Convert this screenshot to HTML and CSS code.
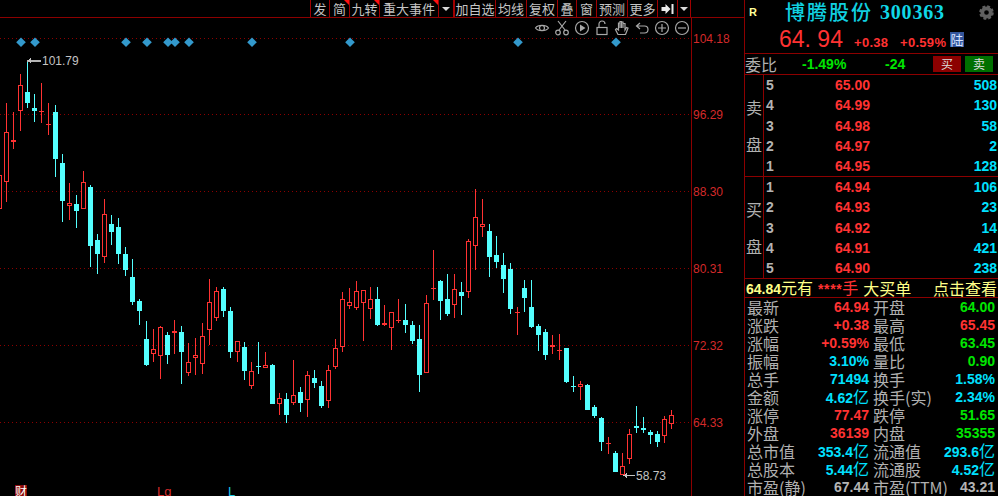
FILE: index.html
```html
<!DOCTYPE html>
<html lang="zh-CN">
<head>
<meta charset="utf-8">
<title>博腾股份 300363</title>
<link rel="stylesheet" href="styles.css">
</head>
<body>
<div class="terminal">
  <section class="chart">
    <nav class="toolbar">
      <span class="tool w19">发</span>
      <span class="tool w20 flag">简</span>
      <span class="tool w30 flag">九转</span>
      <span class="tool w59 flag">重大事件</span>
      <span class="tool w15"><i class="caret"></i></span>
      <span class="tool w42 thick">加自选</span>
      <span class="tool w31">均线</span>
      <span class="tool w31">复权</span>
      <span class="tool w19">叠</span>
      <span class="tool w20">窗</span>
      <span class="tool w31">预测</span>
      <span class="tool w30">更多</span>
      <span class="tool w20">
        <svg class="skip" viewBox="0 0 12 12"><path d="M0 4h4V1l5 5-5 5V8H0zM10 1h2v10h-2z"/></svg>
      </span>
      <span class="tool w14 last"><i class="caret"></i></span>
    </nav>

    <div class="tools">
      <svg viewBox="0 0 16 16"><path d="M1.500 8C4 4.500 12 4.500 14.500 8 12 11.500 4 11.500 1.500 8z"/><circle cx="8" cy="8" r="2.500"/></svg>
      <svg viewBox="0 0 16 16"><path d="M4 1l7 9M12 1l-7 9"/><circle cx="4" cy="12.500" r="2.300"/><circle cx="12" cy="12.500" r="2.300"/></svg>
      <svg viewBox="0 0 16 16"><circle cx="8" cy="8" r="6.500"/><path class="solid" d="M6 4.500L11.500 8 6 11.500z"/></svg>
      <svg viewBox="0 0 16 16"><rect x="3" y="7.500" width="10" height="7"/><path d="M5 7.500V4a3 3 0 0 1 6 0"/></svg>
      <svg viewBox="0 0 16 16"><path d="M4 14.500L1.500 9.500l1-1L4.500 10V3h1.500v5V1.500h1.500V8V2h1.500v6V3.500H11V10l1.500-2.500 1.500.5-1.500 4-1 2.500z"/></svg>
      <svg viewBox="0 0 16 16"><path d="M6 3L2.500 6 6 9M2.500 6h8a3 3 0 0 1 0 7H6"/></svg>
      <svg viewBox="0 0 16 16"><circle cx="8" cy="8" r="6.500"/><path d="M4 8h8M8 4v8"/></svg>
      <svg viewBox="0 0 16 16"><circle cx="8" cy="8" r="6.500"/><path d="M4 8h8"/></svg>
    </div>

    <svg id="plot" class="plot" viewBox="0 18 744 478" width="744" height="478"></svg>
  </section>

  <aside class="panel">
    <header class="quote">
      <div class="quote-title">
        <span class="badge-r">R</span>
        <span class="name">博腾股份</span>
        <span class="code">300363</span>
        <svg class="gear" viewBox="0 0 16 16"><circle class="gear-body" cx="8" cy="8" r="4.500"/><circle class="gear-teeth" cx="8" cy="8" r="6.500"/></svg>
      </div>
      <div class="quote-price">
        <span class="last-price">64. 94</span>
        <span class="delta">+0.38</span>
        <span class="delta pct">+0.59%</span>
        <span class="lu">陆</span>
      </div>
    </header>

    <div class="ratio">
      <span class="label">委比</span>
      <span class="num green ratio-pct">-1.49%</span>
      <span class="num green ratio-diff">-24</span>
      <span class="btn buy">买</span>
      <span class="btn sell">卖</span>
    </div>

    <div class="book">
      <div class="side"><span>卖</span><span>盘</span></div>
      <div class="levels">
        <div class="level"><b>5</b><span class="num red">65.00</span><span class="num cyan">508</span></div>
        <div class="level"><b>4</b><span class="num red">64.99</span><span class="num cyan">130</span></div>
        <div class="level"><b>3</b><span class="num red">64.98</span><span class="num cyan">58</span></div>
        <div class="level"><b>2</b><span class="num red">64.97</span><span class="num cyan">2</span></div>
        <div class="level"><b>1</b><span class="num red">64.95</span><span class="num cyan">128</span></div>
      </div>
    </div>
    <div class="book">
      <div class="side"><span>买</span><span>盘</span></div>
      <div class="levels">
        <div class="level"><b>1</b><span class="num red">64.94</span><span class="num cyan">106</span></div>
        <div class="level"><b>2</b><span class="num red">64.93</span><span class="num cyan">23</span></div>
        <div class="level"><b>3</b><span class="num red">64.92</span><span class="num cyan">14</span></div>
        <div class="level"><b>4</b><span class="num red">64.91</span><span class="num cyan">421</span></div>
        <div class="level"><b>5</b><span class="num red">64.90</span><span class="num cyan">238</span></div>
      </div>
    </div>

    <div class="bigorder">
      <span><b>64.84</b>元有</span>
      <span class="stars"><b>****</b>手</span>
      <span>大买单</span>
      <span class="lookup">点击查看</span>
    </div>

    <div class="stats">
      <div class="stat"><span class="label">最新</span><span class="num red">64.94</span></div>
      <div class="stat"><span class="label">开盘</span><span class="num green">64.00</span></div>
      <div class="stat"><span class="label">涨跌</span><span class="num red">+0.38</span></div>
      <div class="stat"><span class="label">最高</span><span class="num red">65.45</span></div>
      <div class="stat"><span class="label">涨幅</span><span class="num red">+0.59%</span></div>
      <div class="stat"><span class="label">最低</span><span class="num green">63.45</span></div>
      <div class="stat"><span class="label">振幅</span><span class="num cyan">3.10%</span></div>
      <div class="stat"><span class="label">量比</span><span class="num green">0.90</span></div>
      <div class="stat"><span class="label">总手</span><span class="num cyan">71494</span></div>
      <div class="stat"><span class="label">换手</span><span class="num cyan">1.58%</span></div>
      <div class="stat"><span class="label">金额</span><span class="num cyan">4.62<i class="unit">亿</i></span></div>
      <div class="stat"><span class="label">换手(实)</span><span class="num cyan">2.34%</span></div>
      <div class="stat"><span class="label">涨停</span><span class="num red">77.47</span></div>
      <div class="stat"><span class="label">跌停</span><span class="num green">51.65</span></div>
      <div class="stat"><span class="label">外盘</span><span class="num red">36139</span></div>
      <div class="stat"><span class="label">内盘</span><span class="num green">35355</span></div>
      <div class="stat"><span class="label">总市值</span><span class="num cyan">353.4<i class="unit">亿</i></span></div>
      <div class="stat"><span class="label">流通值</span><span class="num cyan">293.6<i class="unit">亿</i></span></div>
      <div class="stat"><span class="label">总股本</span><span class="num cyan">5.44<i class="unit">亿</i></span></div>
      <div class="stat"><span class="label">流通股</span><span class="num cyan">4.52<i class="unit">亿</i></span></div>
      <div class="stat"><span class="label">市盈(静)</span><span class="num gray">67.44</span></div>
      <div class="stat"><span class="label">市盈(TTM)</span><span class="num gray">43.21</span></div>
    </div>
  </aside>
</div>
<script src="chart.js"></script>
</body>
</html>
```
FILE: styles.css
```css
* { box-sizing: border-box; }

html, body {
  margin: 0;
  height: 100%;
  background: #000;
  overflow: hidden;
}

.terminal {
  display: flex;
  width: 998px;
  height: 496px;
  font-family: "Noto Sans CJK SC", "Liberation Sans", sans-serif;
  color: #b0b0b0;
}

/* ---- chart side ---- */
.chart {
  position: relative;
  width: 744px;
  flex: none;
}

.toolbar {
  display: flex;
  justify-content: flex-end;
  height: 18px;
  padding-right: 53px;
  border-bottom: 1px solid #8c0000;
}

.tool {
  position: relative;
  display: flex;
  align-items: center;
  justify-content: center;
  border-left: 1px solid #a00000;
  font-size: 13px;
  line-height: 17px;
  color: #c4c4c4;
  white-space: nowrap;
}
.tool.thick { border-left-width: 2px; }
.tool.last { border-right: 1px solid #a00000; }

.w14 { width: 14px; }
.w15 { width: 15px; }
.w19 { width: 19px; }
.w20 { width: 20px; }
.w30 { width: 30px; }
.w31 { width: 31px; }
.w42 { width: 42px; }
.w59 { width: 59px; }

/* red corner mark on tools that carry a notice */
.flag::after {
  content: "";
  position: absolute;
  top: 0;
  right: 0;
  border-style: solid;
  border-width: 0 5px 5px 0;
  border-color: transparent #ff1010 transparent transparent;
}

.caret {
  width: 0;
  height: 0;
  border-style: solid;
  border-width: 4px 4px 0 4px;
  border-color: #d8d8d8 transparent transparent transparent;
}

.skip { width: 13px; height: 12px; fill: #e8e8e8; }

.tools {
  position: absolute;
  top: 20px;
  right: 54px;
  display: flex;
  gap: 4px;
}
.tools svg {
  width: 16px;
  height: 16px;
  fill: none;
  stroke: #a8a8a8;
  stroke-width: 1.2;
}
.tools .solid { fill: #a8a8a8; stroke: none; }

.plot {
  position: absolute;
  left: 0;
  top: 18px;
  shape-rendering: crispEdges;
}
.plot text {
  font-family: "Liberation Sans", sans-serif;
  font-size: 12px;
}
.grid-line { stroke: #8c0000; stroke-dasharray: 1 3; }
.axis-line { stroke: #8c0000; }
.axis-label { fill: #d42a2a; }
.extreme-label { fill: #c4c4c4; }
.extreme-line { stroke: #b4b4b4; }
.diamond { fill: #3399cc; shape-rendering: auto; }
.up { fill: #ff3232; }
.down { fill: #54ffff; }
.hollow { fill: #000; }
.event-box { fill: #8c0a0a; }
.plot .event-cai { fill: #fff; font-family: "Noto Sans CJK SC", sans-serif; font-size: 12px; }
.plot .event-lg { fill: #d42a2a; font-size: 13px; }
.plot .event-l { fill: #18c8e8; font-size: 13px; }

/* ---- quote panel ---- */
.panel {
  width: 254px;
  flex: none;
  display: flex;
  flex-direction: column;
  border-left: 1px solid #8c0000;
}

.quote {
  height: 54px;
  border-bottom: 1px solid #8c0000;
}

.quote-title {
  display: flex;
  align-items: center;
  height: 24px;
}
.badge-r {
  width: 40px;
  padding-left: 4px;
  font: bold 11px "Liberation Sans", sans-serif;
  color: #ffff99;
}
.name {
  width: 95px;
  font-size: 20px;
  font-weight: 500;
  letter-spacing: 2px;
  line-height: 24px;
  color: #10d0e0;
}
.code {
  font: bold 20px "Liberation Serif", serif;
  letter-spacing: .8px;
  color: #10d8e8;
}
.gear { width: 15px; height: 15px; margin-left: 34px; fill: none; }
.gear-body { stroke: #606060; stroke-width: 4; }
.gear-teeth { stroke: #606060; stroke-width: 2.5; stroke-dasharray: 3 2.100; }

.quote-price {
  display: flex;
  align-items: baseline;
  height: 29px;
  padding-left: 34px;
  padding-top: 2px;
  font-family: "Liberation Sans", sans-serif;
  color: #ff3232;
}
.last-price { width: 75px; font-size: 23px; white-space: pre; }
.delta { width: 46px; font-size: 13px; font-weight: bold; letter-spacing: .3px; }
.delta.pct { width: 50px; }
.lu {
  width: 14px;
  height: 15px;
  background: #33559c;
  color: #d8e4ff;
  font: 13px/15px "Noto Sans CJK SC", sans-serif;
  text-align: center;
  align-self: center;
}

.ratio {
  position: relative;
  display: flex;
  align-items: center;
  height: 21px;
  border-bottom: 1px solid #8c0000;
}
.ratio .label { width: 57px; font-size: 16px; line-height: 18px; }
.ratio-pct { width: 83px; }
.ratio-diff { width: 48px; }
.btn {
  width: 28px;
  height: 16px;
  margin-right: 4px;
  color: #ddd;
  font-size: 12px;
  line-height: 16px;
  text-align: center;
}
.btn.buy { background: #8c0000; }
.btn.sell { background: #007000; }

.num {
  font: bold 14px/18px "Liberation Sans", sans-serif;
  white-space: nowrap;
}
.unit {
  font: normal 16px/18px "Noto Sans CJK SC", sans-serif;
}
.red { color: #ff3232; }
.green { color: #00e600; }
.cyan { color: #00e0ff; }
.gray { color: #b4b4b4; }

.book {
  display: flex;
  height: 102px;
  border-bottom: 1px solid #8c0000;
}
.side {
  width: 19px;
  flex: none;
  display: flex;
  flex-direction: column;
  align-items: center;
  justify-content: center;
  gap: 13px;
  border-right: 1px solid #8c0000;
  font-size: 16px;
  line-height: 24px;
}
.levels {
  flex: 1;
  display: flex;
  flex-direction: column;
}
.level {
  flex: 1;
  display: flex;
  align-items: center;
  padding: 0 1px 0 2px;
}
.level b {
  width: 10px;
  font: bold 14px/18px "Liberation Sans", sans-serif;
  color: #b4b4b4;
}
.level .red { width: 94px; text-align: right; }
.level .cyan { flex: 1; text-align: right; }

.bigorder {
  display: flex;
  align-items: center;
  height: 19px;
  border-bottom: 1px solid #8c0000;
  padding: 0 1px;
  font-size: 16px;
  line-height: 18px;
  color: #ffff88;
  white-space: nowrap;
}
.bigorder b { font: bold 14px/18px "Liberation Sans", sans-serif; }
.stars { margin: 0 5px; color: #ff3232; }
.stars b { letter-spacing: .6px; }
.lookup { margin-left: auto; }

.stats {
  display: grid;
  grid-template-columns: 122px 122px;
  column-gap: 4px;
  grid-auto-rows: 18px;
  padding-left: 2px;
}
.stat {
  display: flex;
  justify-content: space-between;
  align-items: center;
}
.stat .label {
  font-size: 16px;
  line-height: 18px;
  white-space: nowrap;
}
```
FILE: chart.js
```js
// Daily candles: [high, bodyTop, bodyBottom, low, "u" rising | "d" falling].
// Pixel rows on the plot; the first candle sits at x = -1, each next one 7px on.
var candles = [
  [175,175,209,209,"u"],[103,132,182,202,"u"],[112,140,142,149,"u"],[74,85,111,131,"u"],
  [60,92,103,108,"d"],[94,108,111,122,"d"],[83,111,112,123,"u"],[103,124,125,135,"u"],
  [105,112,159,177,"d"],[154,163,201,222,"d"],[183,203,206,220,"u"],[195,204,211,228,"d"],
  [171,182,209,209,"u"],[185,187,246,267,"d"],[234,240,254,274,"d"],[199,214,257,263,"u"],
  [215,224,232,245,"d"],[218,227,254,264,"d"],[247,254,270,276,"d"],[259,277,302,305,"d"],
  [299,301,311,325,"d"],[321,339,365,366,"d"],[329,349,354,362,"u"],[326,327,356,379,"u"],
  [332,335,355,364,"d"],[320,331,333,354,"u"],[326,332,352,384,"d"],[343,362,373,376,"u"],
  [338,355,358,375,"u"],[323,336,364,374,"u"],[279,302,330,345,"u"],[287,291,318,321,"u"],
  [287,289,311,317,"d"],[307,311,352,358,"d"],[341,341,352,362,"u"],[342,347,371,380,"d"],
  [362,371,386,389,"u"],[342,366,367,374,"d"],[352,365,368,368,"u"],[364,365,404,404,"d"],
  [393,398,404,415,"u"],[393,399,415,423,"d"],[360,395,403,405,"u"],[387,392,403,412,"d"],
  [371,375,400,417,"u"],[370,378,383,388,"d"],[381,386,406,408,"d"],[365,370,401,408,"u"],
  [339,348,367,369,"u"],[292,299,347,352,"u"],[288,302,306,309,"u"],[281,291,308,310,"u"],
  [290,290,303,341,"u"],[287,299,309,319,"u"],[287,299,325,326,"d"],[305,323,325,326,"u"],
  [312,312,328,350,"u"],[299,320,321,323,"u"],[304,320,325,333,"d"],[321,325,341,344,"d"],
  [325,339,375,392,"d"],[295,303,373,373,"u"],[250,288,289,300,"u"],[280,281,301,320,"d"],
  [274,299,314,316,"d"],[274,289,305,318,"u"],[282,292,296,315,"d"],[239,241,292,298,"u"],
  [189,217,246,270,"u"],[199,224,227,237,"u"],[224,231,257,277,"d"],[236,255,262,268,"d"],
  [253,265,279,293,"d"],[263,269,309,314,"d"],[307,312,313,335,"u"],[280,288,298,312,"d"],
  [280,307,327,328,"d"],[324,326,335,351,"d"],[329,332,355,360,"d"],[335,345,347,354,"u"],
  [334,350,351,360,"u"],[348,348,382,383,"d"],[376,386,387,392,"d"],[381,384,387,400,"u"],
  [384,385,410,410,"d"],[405,407,416,418,"d"],[417,418,442,451,"d"],[437,443,444,454,"u"],
  [451,453,472,472,"d"],[453,466,475,475,"u"],[429,434,459,464,"u"],[406,426,428,433,"d"],
  [417,428,430,433,"d"],[430,432,435,444,"d"],[431,434,442,447,"d"],[416,419,436,443,"u"],
  [410,415,424,429,"u"]
];

var axisTicks = [
  [38, "104.18"], [114, "96.29"], [191, "88.30"],
  [268, "80.31"], [345, "72.32"], [422, "64.33"]
];

var eventDiamonds = [21, 35, 126, 147, 168, 175, 189, 252, 350, 518, 616];

var plot = document.getElementById("plot");

function add(tag, attrs, text) {
  var node = document.createElementNS("http://www.w3.org/2000/svg", tag);
  Object.keys(attrs).forEach(function (key) { node.setAttribute(key, attrs[key]); });
  if (text) node.textContent = text;
  plot.appendChild(node);
  return node;
}

function box(x, y, w, h, cls) {
  add("rect", { x: x, y: y, width: w, height: h, "class": cls });
}

// price grid and axis
axisTicks.forEach(function (tick) {
  add("line", { x1: 0, x2: 691, y1: tick[0] + 0.5, y2: tick[0] + 0.5, "class": "grid-line" });
  add("text", { x: 693, y: tick[0] + 5, "class": "axis-label" }, tick[1]);
});
add("line", { x1: 691.5, x2: 691.5, y1: 18, y2: 496, "class": "axis-line" });

// event markers along the top of the plot
eventDiamonds.forEach(function (x) {
  add("path", { d: "M" + x + " 37.5l4.800 4.800-4.800 4.800-4.800-4.800z", "class": "diamond" });
});

// candles
candles.forEach(function (c, i) {
  var x = 7 * i - 1, cls = c[4] === "u" ? "up" : "down", h = Math.max(c[2] - c[1], 1);
  box(x, c[0], 1, Math.max(c[3] - c[0], 1), cls);
  box(x - 2, c[1], 5, h, cls);
  if (c[4] === "u" && h > 2) box(x - 1, c[1] + 1, 3, h - 2, "hollow");
});

// high and low callouts
box(27, 60, 13, 1, "extreme-line down");
add("path", { d: "M28 60l3-2v5l-3-2z", "class": "extreme-label" });
add("text", { x: 42, y: 65, "class": "extreme-label" }, "101.79");
box(623, 475, 12, 1, "extreme-label");
add("path", { d: "M623 475.500l4-2.500v5z", "class": "extreme-label" });
add("text", { x: 636, y: 480, "class": "extreme-label" }, "58.73");

// event tags clipped by the bottom edge
box(15, 485, 12, 11, "event-box");
add("text", { x: 15, y: 496, "class": "event-cai" }, "财");
add("text", { x: 157, y: 496, "class": "event-lg" }, "Lg");
add("text", { x: 228, y: 496, "class": "event-l" }, "L");
```
